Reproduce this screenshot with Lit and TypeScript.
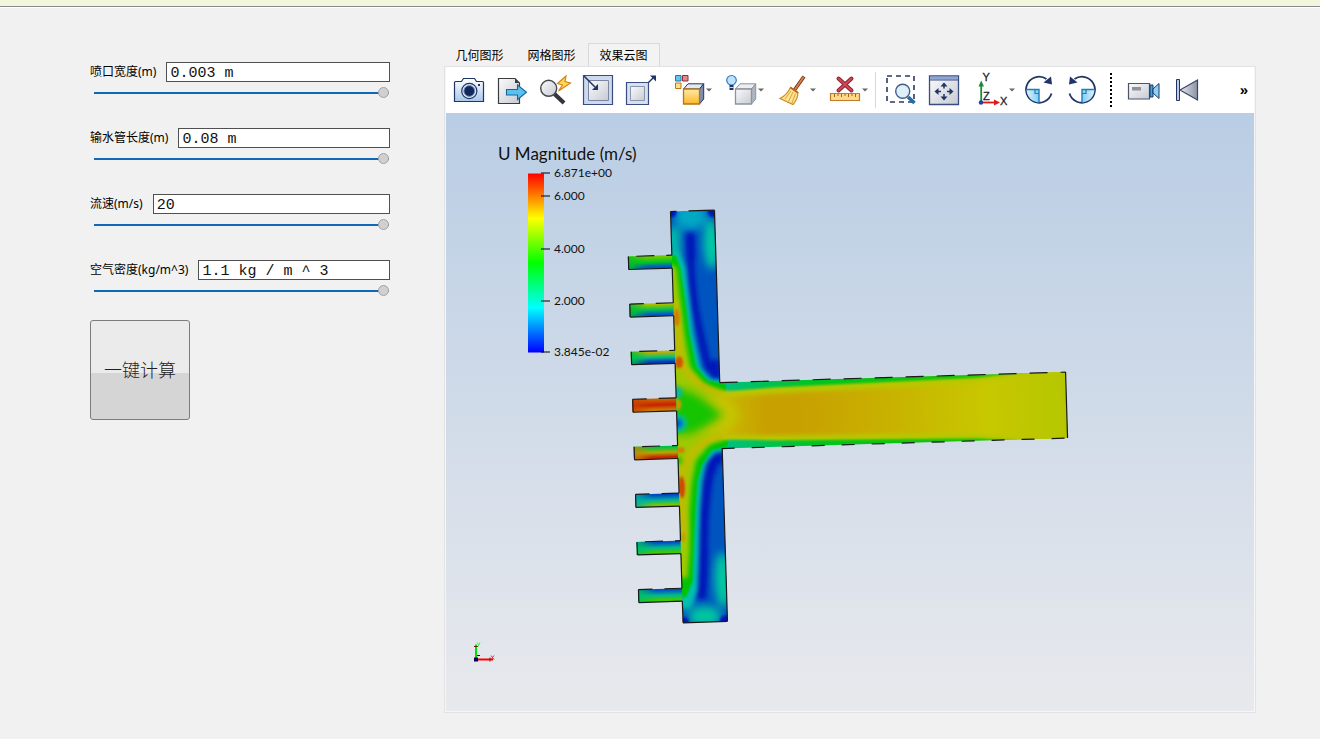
import { LitElement, html, svg, css } from "lit";
import { customElement, property, state } from "lit/decorators.js";

const NAVY = "#1f3566";

interface Tool {
  label: string;
  menu?: boolean;
  icon: unknown;
}

const rotateIcon = svg`
  <path d="M23.500 5A13 13 0 1 0 28.500 19.500" fill="none" stroke=${NAVY} stroke-width="1.800" />
  <path d="M20.500 8.500 29 10.500 28 2.500z" fill=${NAVY} />
  <path d="M3.500 15.500H16V28.500C9 28 4 23 3.500 15.500z" fill="url(#i-sky)" />
  <path d="M3.500 15.500H16V28.500" fill="none" stroke="#1c7fb8" stroke-width="1.400" />
  <path d="M12 15.500v4h4" fill="none" stroke="#1c7fb8" stroke-width="1.200" />`;

const cube = (front: string, stroke: string, top: string, side: string) => svg`
  <path d="M9.500 15 14 9.800H29.700L25.500 15z" fill=${top} stroke=${stroke} />
  <path d="M25.500 15 29.700 9.800V25L25.500 30z" fill=${side} stroke=${stroke} />
  <path d="M9.500 15h16v15h-16z" fill=${front} stroke=${stroke === NAVY ? "#b07818" : stroke} stroke-width="1.300" />`;

const fileTools: Tool[] = [
  {
    label: "截图",
    icon: svg`
      <path d="M1.500 8.500q0-1 1-1h6l2-3h11l2 3h6q1 0 1 1v19h-29z" fill="url(#i-cam)" stroke=${NAVY} stroke-width="1.200" />
      <circle cx="16.300" cy="17" r="7.600" fill="#dceaf8" stroke=${NAVY} stroke-width="1.200" />
      <circle cx="16.300" cy="17" r="5.400" fill="#14275a" stroke="#6f8fc0" />
      <rect x="25" y="10" width="2" height="2" fill=${NAVY} />`,
  },
  {
    label: "导出",
    icon: svg`
      <path d="M2.500 4.500h16.500l4.500 4.500v20.500h-21z" fill="url(#i-gray)" stroke="#3c3c40" stroke-width="1.200" />
      <path d="M19 4.500v4.500h4.500z" fill="#3c3c40" />
      <path d="M10.500 15.500h11v-4.500l9 7.300-9 7.200v-4.500h-11z" fill="#5cc0ee" stroke="#17669c" stroke-width="1.100" />`,
  },
  {
    label: "快速查找",
    icon: svg`
      <path d="M15.500 20 25 29" stroke="#33363c" stroke-width="4.200" />
      <circle cx="9.700" cy="14.300" r="8" fill="url(#i-gray)" stroke="#44474c" stroke-width="1.400" />
      <path d="M27 2 18.500 9.500l5 1.500-4 6L31.500 9l-5.500-1.500z" fill="#ffd75a" stroke="#d88414" stroke-width="1.200" />`,
  },
  {
    label: "缩小",
    icon: svg`
      <path d="M1.500 1.500h29v29h-29z" fill="#cdd9ee" stroke="#3a4d80" stroke-width="1.200" />
      <path d="M6.500 6.500h20v20h-20z" fill="url(#i-gray)" stroke="#7c86a0" />
      <path d="M2 2 13 13" stroke=${NAVY} stroke-width="1.500" />
      <path d="M16 16V10L10 16z" fill=${NAVY} />`,
  },
  {
    label: "放大",
    icon: svg`
      <path d="M1.500 8.500h22v22h-22z" fill="#d8e0ee" stroke="#3a4d80" stroke-width="1.200" />
      <path d="M5.500 12.500h14v14h-14z" fill="url(#i-gray)" stroke="#8a94aa" />
      <path d="M23.500 8.500 28 4" stroke=${NAVY} stroke-width="1.500" />
      <path d="M25 1.500H31V7.500z" fill=${NAVY} />`,
  },
];

const sceneTools: Tool[] = [
  {
    label: "着色",
    menu: true,
    icon: svg`
      <path d="M1.500 1.500h5.500v5.500h-5.500z" fill="#63c6ee" stroke="#1f78a8" />
      <path d="M8.500 1.500h5.500v5.500h-5.500z" fill="#e08a8a" stroke="#8c2f3a" />
      <path d="M1.500 9h5.500v5.500h-5.500z" fill="#ffdf8a" stroke="#b87818" />
      ${cube("url(#i-gold)", NAVY, "#e4e8f0", "#7d8db2")}`,
  },
  {
    label: "光照",
    menu: true,
    icon: svg`
      ${cube("url(#i-gray)", "#8d929c", "#eceef2", "#b0b6c0")}
      <circle cx="5.500" cy="6.300" r="4.800" fill="#bfe2fa" stroke="#2f7cbc" stroke-width="1.200" />
      <path d="M3.500 11h4v5h-4z" fill=${NAVY} /><path d="M3.500 13.500h4" stroke="#cfd8e8" />`,
  },
  {
    label: "清除",
    menu: true,
    icon: svg`
      <path d="M26 2.500 16.500 16" stroke="#7a3414" stroke-width="3.600" />
      <path d="M25.700 2.800 17 15.500" stroke="#d8824c" stroke-width="1.800" />
      <path d="M12.500 13.500Q9 21 2 24.500L15 30.500Q19.500 26 20 18.500z" fill="#ffe394" stroke="#c98a20" stroke-width="1.200" />
      <path d="M13 17 7 25M15 18 10.500 27.500M17.500 19.500 14 29" stroke="#dba63c" />
      <path d="M12.500 13.500 20 18.800" stroke="#b8641c" stroke-width="1.600" />`,
  },
  {
    label: "删除测量",
    menu: true,
    icon: svg`
      <path d="M8.500 4.500 21.500 16.500M21.500 4.500 8.500 16.500" stroke="#8c1f2c" stroke-width="4" stroke-linecap="round" />
      <path d="M8.500 4.500 21.500 16.500M21.500 4.500 8.500 16.500" stroke="#cf4a56" stroke-width="2" stroke-linecap="round" />
      <path d="M.500 19.500h29v7h-29z" fill="#ffd88a" stroke="#c07c28" stroke-width="1.200" />
      <path d="M4.500 20v3M8 20v2M11.500 20v3M15 20v2M18.500 20v3M22 20v2M25.500 20v3" stroke="#a8641c" />`,
  },
];

const viewTools: Tool[] = [
  {
    label: "框选缩放",
    icon: svg`
      <path d="M2 2h27v26h-27z" fill="none" stroke="#2b3a66" stroke-width="1.600" stroke-dasharray="5 4" />
      <path d="M23 23 29.500 29" stroke="#1f6ea8" stroke-width="3.600" />
      <circle cx="17.700" cy="17.300" r="7" fill="#dff0fb" stroke="#3f5f88" stroke-width="1.400" />`,
  },
  {
    label: "适应窗口",
    icon: svg`
      <path d="M1.500 2h29v28.500h-29z" fill="url(#i-gray)" stroke="#3a4d80" stroke-width="1.300" />
      <path d="M2 2.500h28v3h-28z" fill="#8fa6d4" /><path d="M1.500 6h29" stroke="#3a4d80" />
      <path d="M16 9.500v5M16 20v5M8 17.500h5M19 17.500h5" stroke=${NAVY} stroke-width="1.500" />
      <path d="M16 8.500l3.500 4h-7zM16 26.500l3.500-4h-7zM6.500 17.500l4-3.500v7zM25.500 17.500l-4-3.500v7z" fill=${NAVY} />`,
  },
  {
    label: "视图方向",
    menu: true,
    icon: svg`
      <path d="M4.200 28V10" stroke="#198a3a" stroke-width="1.800" /><path d="M4.200 6.500 7 12.500H1.500z" fill="#198a3a" />
      <path d="M4 28.500H18" stroke="#e01818" stroke-width="1.800" /><path d="M23 28.500 17 25.500v6z" fill="#e01818" />
      <circle cx="4" cy="28.500" r="2.200" fill="#2440a8" />
      <text x="5.500" y="7" class="axis">Y</text><text x="6" y="26" class="axis">Z</text><text x="23" y="31" class="axis">X</text>`,
  },
  { label: "顺时针旋转", icon: rotateIcon },
  { label: "逆时针旋转", icon: svg`<g transform="matrix(-1 0 0 1 32 0)">${rotateIcon}</g>` },
];

const playTools: Tool[] = [
  {
    label: "录像",
    icon: svg`
      <path d="M.500 9.500h21v15.500h-21z" fill="url(#i-gray)" stroke="#4c5468" stroke-width="1.200" />
      <path d="M4 13h9v3.500h-9z" fill="#8e929c" />
      <path d="M22 11h3v12h-3z" fill="#39a6dc" stroke=${NAVY} />
      <path d="M25 15 31 9.500V24.500L25 19z" fill="#8fd2f2" stroke=${NAVY} />`,
  },
  {
    label: "跳到开始",
    icon: svg`
      <path d="M5.500 5.500h3v21h-3z" fill="#c2cbe0" stroke=${NAVY} />
      <path d="M9 16 26.500 6V26z" fill="url(#i-steel)" stroke="#3a4668" stroke-width="1.200" />`,
  },
];

/** Shared gradients for the toolbar glyphs. */
const iconDefs = svg`<defs>
  <linearGradient id="i-cam" x1="0" y1="0" x2="0" y2="1"><stop offset="0" stop-color="#fff" /><stop offset="1" stop-color="#a9c6ea" /></linearGradient>
  <linearGradient id="i-gray" x1="0" y1="0" x2="1" y2="1"><stop offset="0" stop-color="#fbfbfc" /><stop offset="1" stop-color="#c6cad2" /></linearGradient>
  <linearGradient id="i-gold" x1="0" y1="0" x2="0" y2="1"><stop offset="0" stop-color="#ffe9a8" /><stop offset="1" stop-color="#fcb928" /></linearGradient>
  <linearGradient id="i-steel" x1="0" y1="0" x2="1" y2="0"><stop offset="0" stop-color="#e8eaee" /><stop offset="1" stop-color="#8a92a4" /></linearGradient>
  <linearGradient id="i-sky" x1="0" y1="0" x2="1" y2="0"><stop offset="0" stop-color="#dcf2fd" /><stop offset="1" stop-color="#7fcdf4" /></linearGradient>
</defs>`;

@customElement("tool-button")
class ToolButton extends LitElement {
  @property({ attribute: false }) tool!: Tool;

  static styles = css`
    :host { display: block; }
    .tool {
      display: flex;
      align-items: center;
      width: 43px;
      height: 40px;
      padding: 0 0 0 5px;
      border: 0;
      background: none;
    }
    .menu { width: 52px; padding-left: 11px; }
    .glyph { flex: none; overflow: visible; }
    .arrow { flex: none; }
    .axis { font: 11px "Liberation Sans", sans-serif; fill: #222; stroke: #222; stroke-width: 0.3; }
  `;

  render() {
    return html`<button class="tool ${this.tool.menu ? "menu" : ""}" type="button" aria-label=${this.tool.label}>
      <svg class="glyph" width="32" height="32" viewBox="0 0 32 32">${iconDefs}${this.tool.icon}</svg>
      ${this.tool.menu
        ? html`<svg class="arrow" width="6" height="4" viewBox="0 0 6 4"><path d="M0 .5h6L3 3.500z" fill="#666" /></svg>`
        : null}
    </button>`;
  }
}

@customElement("param-field")
class ParamField extends LitElement {
  @property() label = "";
  @property() value = "";
  @state() private level = 100;

  static styles = css`
    :host { display: block; }
    .row { display: flex; align-items: center; gap: 10px; }
    .name { font: 12px/20px "Noto Sans", "Noto Sans CJK SC", sans-serif; color: #000; white-space: nowrap; }
    .box {
      flex: 1;
      min-width: 0;
      box-sizing: border-box;
      height: 20px;
      padding: 3px 3px 0;
      border: 1px solid #505050;
      border-radius: 0;
      background: #fff;
      color: #111;
      font: 15px/15px "Liberation Mono", monospace;
      outline: none;
    }
    .range {
      display: block;
      appearance: none;
      box-sizing: border-box;
      width: calc(100% - 5px);
      height: 11px;
      margin: 5px 1px 0 4px;
      background: linear-gradient(to right, #0f68b8 var(--level), #8a8a8a var(--level)) center / 100% 2px no-repeat;
    }
    .range::-webkit-slider-thumb {
      appearance: none;
      box-sizing: border-box;
      width: 11px;
      height: 11px;
      border: 1px solid #a3a3a3;
      border-radius: 50%;
      background: #d0d0d0;
    }
  `;

  render() {
    return html`
      <div class="row">
        <label class="name" for="value">${this.label}</label>
        <input class="box" id="value" type="text" .value=${this.value} />
      </div>
      <input
        class="range"
        type="range"
        min="0"
        max="100"
        aria-label=${this.label}
        style="--level:${this.level}%"
        .value=${String(this.level)}
        @input=${(e: Event) => (this.level = Number((e.target as HTMLInputElement).value))}
      />
    `;
  }
}

/* Nozzle colours: the upper edge, middle and lower edge, and the open left end. */
const nozzles = [
  ["#6cc800", "#00c428", "#0058c8", "#00c020"],
  ["#a4c000", "#00c050", "#0058c8", "#00c030"],
  ["#c0b000", "#00c080", "#0038c0", "#00c040"],
  ["#c86000", "#c82000", "#c87800", "#c84400"],
  ["#00c440", "#b4a800", "#c82400", "#c08800"],
  ["#0048c0", "#00b0a0", "#70c800", "#00b0a0"],
  ["#0050c4", "#00b890", "#40c800", "#00c060"],
  ["#0050c4", "#00b890", "#40c800", "#00c060"],
];
const NOZZLE_TOP = 43.7;
const NOZZLE_PITCH = 47.6;
const nozzleY = (i: number) => NOZZLE_TOP + NOZZLE_PITCH * i;

const ticks = [
  ["6.871e+00", 172],
  ["6.000", 195],
  ["4.000", 248],
  ["2.000", 300],
  ["3.845e-02", 351],
] as const;

@customElement("flow-view")
class FlowView extends LitElement {
  static styles = css`
    :host {
      display: block;
      flex: 1;
      min-height: 0;
      background: linear-gradient(#b9cde4, #e8e9ed);
      overflow: hidden;
    }
    .scene { display: block; width: 100%; height: 100%; }
    .title { font: 17px "Lato", sans-serif; fill: #111; }
    .tick { font: 12px "Lato", sans-serif; fill: #111; }
    .edge { fill: none; stroke: #1a1a1a; stroke-width: 1.2; }
    .soft { filter: url(#b2); }
    .softer { filter: url(#b4); }
    .fine { filter: url(#b1); }
  `;

  private nozzle(c: string[], i: number) {
    const y = nozzleY(i);
    return svg`
      <linearGradient id="n${i}" x1="0" y1="0" x2="0" y2="1">
        <stop offset="0.1" stop-color=${c[0]} /><stop offset="0.500" stop-color=${c[1]} /><stop offset="0.850" stop-color=${c[2]} />
      </linearGradient>
      <linearGradient id="m${i}">
        <stop offset="0" stop-color=${c[3]} stop-opacity="0.9" /><stop offset="0.400" stop-color=${c[3]} stop-opacity="0" />
      </linearGradient>
      <rect x="-44" y=${y} width="46" height="13" fill="url(#n${i})" />
      <rect x="-44" y=${y} width="46" height="13" fill="url(#m${i})" />`;
  }

  private outline() {
    const wall = [0, ...nozzles.map((_, i) => nozzleY(i) + 13)];
    return svg`
      <path class="edge" d="M0 0H44" stroke-dasharray="6 12 30" />
      <path class="edge" d="M44 0V172.500M44.500 238.500V411.500" />
      <path class="edge" d="M0 411.500H44" />
      <path class="edge" d="M44 172.500H390" stroke-dasharray="18 13" />
      <path class="edge" d="M44 238.500H390" stroke-dasharray="13 17" />
      <path class="edge" d="M390 172.500V238.500" />
      ${wall.map((y, i) => svg`<path class="edge" d="M0 ${y}V${i < 8 ? nozzleY(i) : 411.5}" />`)}
      ${nozzles.map((_, i) => {
        const y = nozzleY(i);
        return svg`
          <path class="edge" d="M-43.500 ${y}H0" stroke-dasharray="${i % 2 ? "14 12 18" : "0 8 18 12 10"}" />
          <path class="edge" d="M-43.500 ${y + 13}H0" />
          <path class="edge" d="M-43.500 ${y}v13" />`;
      })}`;
  }

  render() {
    return html`<svg class="scene" viewBox="446 113 808 597" role="img" aria-label="U Magnitude (m/s)">
      <defs>
        <filter id="b1" x="-50%" y="-50%" width="200%" height="200%"><feGaussianBlur stdDeviation="1.300" /></filter>
        <filter id="b2" x="-50%" y="-50%" width="200%" height="200%"><feGaussianBlur stdDeviation="2.200" /></filter>
        <filter id="b4" x="-50%" y="-50%" width="200%" height="200%"><feGaussianBlur stdDeviation="4.500" /></filter>
        <linearGradient id="scale" x1="0" y1="0" x2="0" y2="1">
          <stop offset="0" stop-color="#f00" /><stop offset="0.250" stop-color="#ff0" />
          <stop offset="0.500" stop-color="#0f0" /><stop offset="0.750" stop-color="#0ff" /><stop offset="1" stop-color="#00f" />
        </linearGradient>
        <linearGradient id="core">
          <stop offset="0" stop-color="#c8b800" /><stop offset="0.130" stop-color="#c8a000" /><stop offset="0.250" stop-color="#c8a200" />
          <stop offset="0.500" stop-color="#c8b400" /><stop offset="0.750" stop-color="#c8c800" /><stop offset="1" stop-color="#b2c600" />
        </linearGradient>
        <linearGradient id="film">
          <stop offset="0" stop-color="#00c080" /><stop offset="0.250" stop-color="#00c420" /><stop offset="0.750" stop-color="#18c400" />
          <stop offset="0.950" stop-color="#a0c600" />
        </linearGradient>
        <clipPath id="body">
          <path d="M0 0H44V172.500H390V238.500H44.500V411.500H0z" />
        </clipPath>
      </defs>

      <text class="title" x="498" y="159">U Magnitude (m/s)</text>
      <rect x="528" y="173" width="16" height="179" fill="url(#scale)" />
      ${ticks.map(
        ([text, y]) => svg`
          <rect x="541" y=${y} width="9" height="1" fill="#000" />
          <text class="tick" x="554" y=${y + 4}>${text}</text>`,
      )}

      <g transform="translate(670.5 211) rotate(-1.74)">
        ${nozzles.map((c, i) => this.nozzle(c, i))}
        <g clip-path="url(#body)">
          <rect width="46" height="412" fill="#0054c0" />

          <g class="softer">
            <ellipse cx="20" cy="5" rx="16" ry="14" fill="#00a8c4" />
            <path d="M-6 16H9V160H-6z" fill="#00bca8" />
            <ellipse cx="40" cy="34" rx="8" ry="25" fill="#00cca4" />
            <ellipse cx="22" cy="406" rx="16" ry="11" fill="#00c4a0" />
            <path d="M-6 260H9V398H-6z" fill="#00bca8" />
            <ellipse cx="41" cy="370" rx="8" ry="28" fill="#00cca0" />
          </g>
          <g class="soft" fill="none" stroke="#0014b8">
            <path d="M19 22V48" stroke-width="9" />
            <path d="M19 40Q18 80 24 112T34 162" stroke-width="7" />
            <path d="M40 150V172M34 246V262M40 240V254" stroke-width="9" />
            <path d="M34 250Q24 290 23 330T19 388" stroke-width="9" />
          </g>
          <g class="fine" fill="#0018b8">
            <circle cx="1" cy="1" r="5" /><circle cx="43" cy="1" r="6" /><circle cx="1" cy="411" r="5" /><circle cx="43" cy="411" r="6" />
          </g>

          <path class="soft" fill="#00c0b0" d="M-4 40H6L13 56 16 89 19 122 25 156 34 168 54 171V240L36 243 27 254 23 270 20 300 18 337 15 380 8 396H-4z" />
          <path class="fine" fill="#00c400" d="M-4 44H4L8 56 12 89 15 122 21 156 32 170 54 175V236L34 240 24 254 19 270 16 300 13 337 11 370 4 386H-4z" />
          <rect x="50" y="172" width="345" height="68" fill="url(#film)" />
          <path class="soft" fill="#a0c800" d="M-4 52 4 56 7 89 10 122 15 156 28 174 54 183H90V228H54L32 234 18 250 13 272 10 300 9 337 6 366-4 368z" />
          <path class="fine" fill="#b8c800" d="M44 182 100 179 300 175.500 400 168V244L300 236 100 232 44 229z" />
          <path class="soft" fill="url(#core)" d="M44 187Q70 186 100 185L300 181 400 168V244L300 231 100 227Q70 226 44 225z" />

          <g class="soft" fill="none" stroke="#c8b800" stroke-width="5">
            <path d="M2 90Q4 120 5 150 14 172 50 187" />
            <path d="M50 224Q10 232 5 260T4 325" />
          </g>
          <path class="softer" fill="#c4c400" d="M20 186 52 188 64 205 52 222 20 224z" />
          <path class="softer" fill="#18c400" d="M-8 176 12 180 28 189 46 205 28 217 12 223-8 222z" />
          <g class="soft">
            <circle cx="0" cy="181" r="6" fill="#00b8b8" />
            <circle cx="1" cy="212" r="9" fill="#00c0a0" />
            <circle cx="1" cy="212" r="5" fill="#0050c8" />
            <ellipse cx="1" cy="249" rx="3" ry="4" fill="#20c400" />
          </g>
          <g class="fine">
            <ellipse cx="3" cy="106" rx="3" ry="9" fill="#d08000" />
            <ellipse cx="4" cy="151" rx="4" ry="6" fill="#d05800" />
            <ellipse cx="1" cy="193" rx="4" ry="6" fill="#c89800" />
            <ellipse cx="3" cy="239" rx="4" ry="3" fill="#d08000" />
            <ellipse cx="3" cy="276" rx="3" ry="11" fill="#d04400" />
            <ellipse cx="3" cy="326" rx="2" ry="5" fill="#c89c00" />
          </g>
        </g>
        ${this.outline()}
      </g>

      <g>
        <path d="M476 658V644" stroke="#00e000" stroke-width="2" /><path d="M476 659H493" stroke="#f00" stroke-width="2" />
        <path d="M474 646h4M490 657v4" stroke="#602010" />
        <path d="M477 655h3" stroke="#00c" />
        <rect x="474" y="657" width="4" height="4" fill="#000060" />
        <path d="M477 642l1.500 2M480 642l-2 4" stroke="#2f2" /><path d="M491 655l3 4M494 655l-3 4" stroke="#f22" />
      </g>
    </svg>`;
  }
}

@customElement("app-root")
class AppRoot extends LitElement {
  @state() private tab = 2;

  private tabs = ["几何图形", "网格图形", "效果云图"];
  private fields = [
    ["喷口宽度(m)", "0.003 m"],
    ["输水管长度(m)", "0.08 m"],
    ["流速(m/s)", "20"],
    ["空气密度(kg/m^3)", "1.1 kg / m ^ 3"],
  ];

  static styles = css`
    :host {
      display: flex;
      flex-direction: column;
      min-height: 100vh;
      background: #f1f1f1;
      color: #000;
    }
    .strip { height: 6px; background: #f2f6dd; border-bottom: 1px solid #868a86; box-shadow: 0 1px #fff; }
    .main { flex: 1; display: flex; gap: 54px; padding: 36px 64px 26px 90px; }
    .params { flex: none; width: 300px; padding-top: 19px; display: flex; flex-direction: column; gap: 30px; }
    .run {
      width: 100px;
      height: 100px;
      margin-top: -6px;
      padding: 0 0 3px;
      border: 1px solid #7c7c7c;
      border-radius: 3px;
      background: linear-gradient(#ebebeb 53%, #d5d5d5 53%);
      color: #222;
      font: 300 18px "Noto Sans CJK SC", sans-serif;
    }
    .results { flex: 1; min-width: 0; display: flex; flex-direction: column; }
    .tabs { display: flex; height: 23px; }
    .tab {
      width: 72px;
      padding: 0 1px 0 0;
      border: 1px solid transparent;
      border-bottom: 0;
      background: none;
      color: #000;
      font: 12px/22px "Noto Sans CJK SC", sans-serif;
    }
    .current { border-color: #d9d9d9; background: #f3f3f3; }
    .pane { flex: 1; display: flex; flex-direction: column; border: 1px solid #e2e2e2; padding: 0 1px 1px; background: #f6f6f6; }
    .toolbar { display: flex; align-items: center; height: 46px; padding: 0 6px 0 2px; background: #fff; }
    .group { display: flex; }
    .line { width: 1px; height: 36px; margin: 0 4px; background: #d8d8d8; }
    .dots {
      width: 2px;
      height: 34px;
      margin: 0 11px 0 6px;
      background: repeating-linear-gradient(#000 0 2px, transparent 2px 4px);
    }
    .more { margin-left: auto; padding: 0; border: 0; background: none; font: bold 15px/20px "Liberation Sans", sans-serif; color: #000; }
  `;

  private group(tools: Tool[]) {
    return html`<div class="group">${tools.map((t) => html`<tool-button .tool=${t}></tool-button>`)}</div>`;
  }

  render() {
    return html`
      <div class="strip"></div>
      <main class="main">
        <form class="params" @submit=${(e: Event) => e.preventDefault()}>
          ${this.fields.map(([label, value]) => html`<param-field .label=${label} .value=${value}></param-field>`)}
          <button class="run" type="submit">一键计算</button>
        </form>
        <section class="results">
          <div class="tabs" role="tablist">
            ${this.tabs.map(
              (name, i) => html`<button
                class="tab ${i === this.tab ? "current" : ""}"
                type="button"
                role="tab"
                aria-selected=${i === this.tab}
                @click=${() => (this.tab = i)}
              >${name}</button>`,
            )}
          </div>
          <div class="pane">
            <div class="toolbar" role="toolbar">
              ${this.group(fileTools)}${this.group(sceneTools)}
              <div class="line"></div>
              ${this.group(viewTools)}
              <div class="dots"></div>
              ${this.group(playTools)}
              <button class="more" type="button">»</button>
            </div>
            <flow-view></flow-view>
          </div>
        </section>
      </main>
    `;
  }
}
